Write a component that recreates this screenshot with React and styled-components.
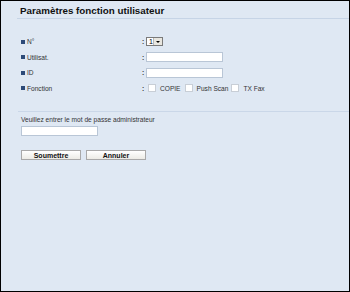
import React from "react";
import styled, { createGlobalStyle } from "styled-components";

const Global = createGlobalStyle`
  html, body { margin: 0; padding: 0; }
  body { font-family: "Liberation Sans", Arial, sans-serif; }
`;

const Frame = styled.div`
  box-sizing: border-box;
  width: 350px;
  height: 292px;
  border: 1px solid #000;
  background: #dfe8f3;
  color: #222;
`;

const Title = styled.h1`
  margin: 0 0 0 16px;
  padding: 3px 0 0 3px;
  height: 14px;
  font-size: 9.8px;
  font-weight: bold;
  line-height: 14px;
  color: #111;
  border-bottom: 1px solid #c6d4e6;
`;

const Form = styled.div`
  padding: 15px 0 0 20px;
`;

const Grid = styled.div`
  display: grid;
  grid-template-columns: 121px 4px auto;
  grid-auto-rows: 15.5px;
  align-items: center;
  font-size: 6.6px;
`;

const Label = styled.div`
  display: flex;
  align-items: center;
  gap: 2px;
  color: #333;
  &::before {
    content: "";
    width: 4px;
    height: 4px;
    background: #2c4a78;
  }
`;

const Colon = styled.div`
  font-weight: bold;
  color: #333;
`;

const Select = styled.div`
  box-sizing: border-box;
  width: 17px;
  height: 9px;
  border: 1px solid #7a7a7a;
  background: #fff;
  display: flex;
  align-items: center;
  justify-content: space-between;
  padding-left: 2px;
  font-size: 7px;
  color: #000;
`;

const Arrow = styled.span`
  width: 8px;
  height: 7px;
  background: #e8e6df;
  border-left: 1px solid #b8b8b8;
  display: flex;
  align-items: center;
  justify-content: center;
  &::after {
    content: "";
    border-left: 2px solid transparent;
    border-right: 2px solid transparent;
    border-top: 2px solid #000;
  }
`;

const TextInput = styled.div`
  box-sizing: border-box;
  width: ${(p) => p.$w || 77}px;
  height: 10px;
  background: #fff;
  border: 1px solid #b9c6d6;
`;

const Checks = styled.div`
  display: flex;
  align-items: center;
  color: #333;
  padding-left: 2px;
`;

const Box = styled.span`
  box-sizing: border-box;
  width: 8px;
  height: 8px;
  background: #fff;
  border: 1px solid #c8ced6;
  margin-right: 4px;
`;

const CheckText = styled.span`
  margin-right: ${(p) => p.$mr}px;
`;

const Divider = styled.div`
  margin: 15px 0 0 -3px;
  border-top: 1px solid #cad7e8;
`;

const Prompt = styled.div`
  margin-top: 4px;
  font-size: 6.6px;
  color: #333;
`;

const PasswordInput = styled(TextInput)`
  margin-top: 3px;
`;

const Buttons = styled.div`
  display: flex;
  gap: 5px;
  margin-top: 14px;
`;

const Button = styled.div`
  box-sizing: border-box;
  width: 60px;
  height: 10px;
  border: 1px solid #a9a9a9;
  background: linear-gradient(#ffffff, #ecebe6);
  font-size: 7px;
  font-weight: bold;
  color: #111;
  display: flex;
  align-items: center;
  justify-content: center;
`;

export default function App() {
  return (
    <Frame>
      <Global />
      <Title>Paramètres fonction utilisateur</Title>
      <Form>
        <Grid>
          <Label>N°</Label>
          <Colon>:</Colon>
          <Select>
            1<Arrow />
          </Select>
          <Label>Utilisat.</Label>
          <Colon>:</Colon>
          <TextInput />
          <Label>ID</Label>
          <Colon>:</Colon>
          <TextInput />
          <Label>Fonction</Label>
          <Colon>:</Colon>
          <Checks>
            <Box />
            <CheckText $mr={4}>COPIE</CheckText>
            <Box />
            <CheckText $mr={3}>Push Scan</CheckText>
            <Box />
            <CheckText $mr={0}>TX Fax</CheckText>
          </Checks>
        </Grid>
        <Divider />
        <Prompt>Veuillez entrer le mot de passe administrateur</Prompt>
        <PasswordInput $w={77} />
        <Buttons>
          <Button>Soumettre</Button>
          <Button>Annuler</Button>
        </Buttons>
      </Form>
    </Frame>
  );
}
